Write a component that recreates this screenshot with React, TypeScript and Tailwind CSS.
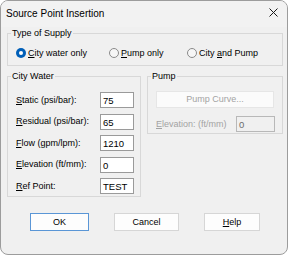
import React from "react";

function Key({ k, rest, pre = "" }: { k: string; rest: string; pre?: string }) {
  return (
    <span>
      {pre}
      <span className="underline underline-offset-[1px]">{k}</span>
      {rest}
    </span>
  );
}

function Radio({ checked }: { checked?: boolean }) {
  if (checked) {
    return (
      <span className="flex h-[10px] w-[10px] items-center justify-center rounded-full bg-[#005fb8]">
        <span className="h-[4px] w-[4px] rounded-full bg-white" />
      </span>
    );
  }
  return <span className="h-[10px] w-[10px] rounded-full border border-[#8a8a8a] bg-[#f6f6f6]" />;
}

const ROWS = [
  { k: "S", rest: "tatic (psi/bar):", value: "75" },
  { k: "R", rest: "esidual (psi/bar):", value: "65" },
  { k: "F", rest: "low (gpm/lpm):", value: "1210" },
  { k: "E", rest: "levation (ft/mm):", value: "0" },
  { k: "R", rest: "ef Point:", value: "TEST" },
];

export default function App() {
  return (
    <div className="flex h-[255px] w-[288px] flex-col overflow-hidden rounded-[8px] border border-[#9c9c9c] bg-[#f0f0f0] font-['Liberation_Sans',Arial,sans-serif] text-[9px] leading-[11px] text-black">
      {/* title bar */}
      <div className="flex h-[26px] shrink-0 items-center justify-between bg-[#f2f2f2] pl-[5px] pr-[9px]">
        <span className="text-[10px] leading-[12px]">Source Point Insertion</span>
        <svg width="9" height="9" viewBox="0 0 9 9" className="mb-[3px]">
          <path d="M0.5 0.5 L8.5 8.5 M8.5 0.5 L0.5 8.5" stroke="#1a1a1a" strokeWidth="1" />
        </svg>
      </div>

      <div className="flex flex-col pl-[6px] pr-[4px] pt-[1px]">
        {/* type of supply */}
        <fieldset className="border border-[#d8d8d8] px-0 pb-[6px] pt-[8px]">
          <legend className="ml-[3px] px-[1px] leading-[11px]">Type of Supply</legend>
          <div className="flex h-[12px] items-center pl-[8px]">
            <div className="flex w-[93px] items-center gap-[2px]">
              <Radio checked />
              <Key k="C" rest="ity water only" />
            </div>
            <div className="flex w-[78px] items-center gap-[2px]">
              <Radio />
              <Key k="P" rest="ump only" />
            </div>
            <div className="flex items-center gap-[2px]">
              <Radio />
              <Key pre="City " k="a" rest="nd Pump" />
            </div>
          </div>
        </fieldset>

        <div className="mt-[5px] flex items-start gap-[6px]">
          {/* city water */}
          <fieldset className="w-[134px] border border-[#d8d8d8] px-0 pb-[2px] pt-[10px]">
            <legend className="ml-[3px] px-[1px] leading-[11px]">City Water</legend>
            <div className="flex flex-col gap-[5.5px] pl-[8px]">
              {ROWS.map((r) => (
                <div key={r.rest} className="flex h-[16px] items-center">
                  <span className="w-[84px]">
                    <Key k={r.k} rest={r.rest} />
                  </span>
                  <div className="h-[16px] w-[34px] border border-[#9a9a9a] bg-white pl-[2px] pt-[2px] text-[9.5px] leading-[11px]">
                    {r.value}
                  </div>
                </div>
              ))}
            </div>
          </fieldset>

          {/* pump */}
          <fieldset className="flex-1 border border-[#d8d8d8] px-0 pb-[1px] pt-[9px]">
            <legend className="ml-[3px] px-[1px] leading-[11px]">Pump</legend>
            <div className="flex flex-col pl-[8px]">
              <div className="flex h-[17px] w-[118px] items-center justify-center border border-[#e6e6e6] bg-[#fbfbfb] text-[#a3a3a3]">
                Pump Curve...
              </div>
              <div className="mt-[8px] flex h-[16px] items-center">
                <span className="w-[80px] text-[#a3a3a3]">
                  <Key k="E" rest="levation: (ft/mm)" />
                </span>
                <div className="h-[16px] w-[39px] border border-[#b8b8b8] bg-[#f0f0f0] pl-[2px] pt-[2px] text-[9.5px] leading-[11px] text-[#6d6d6d]">
                  0
                </div>
              </div>
            </div>
          </fieldset>
        </div>

        {/* buttons */}
        <div className="mt-[16px] flex gap-[25px] pl-[23px]">
          <div className="flex h-[18px] w-[59px] items-center justify-center border border-[#5a96d6] bg-[#fdfdfd]">
            OK
          </div>
          <div className="flex h-[18px] w-[65px] items-center justify-center border border-[#d6d6d6] bg-[#fdfdfd]">
            Cancel
          </div>
          <div className="flex h-[18px] w-[56px] items-center justify-center border border-[#d6d6d6] bg-[#fdfdfd]">
            <Key k="H" rest="elp" />
          </div>
        </div>
      </div>
    </div>
  );
}
